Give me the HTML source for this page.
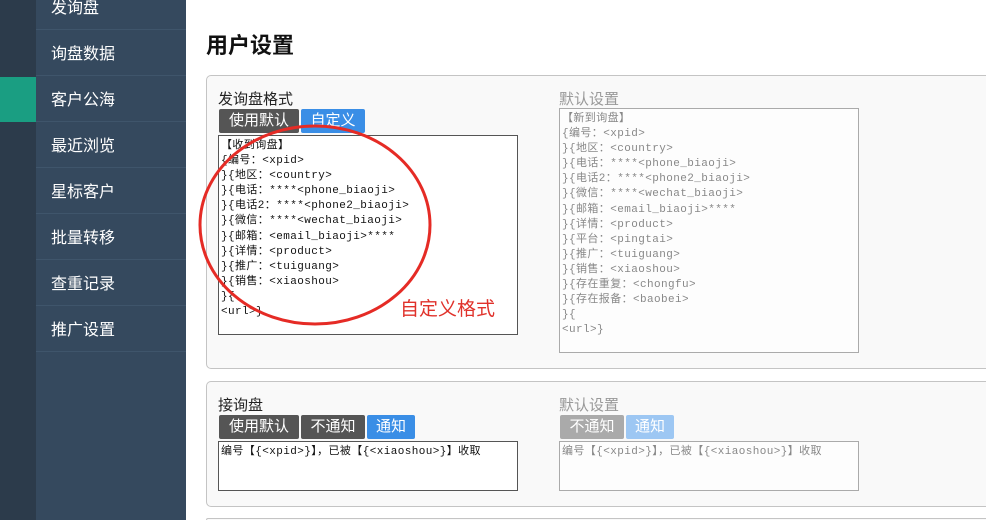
<!DOCTYPE html>
<html><head><meta charset="utf-8"><style>
*{margin:0;padding:0;box-sizing:border-box}
html,body{width:986px;height:520px;overflow:hidden}
body{background:#fff;font-family:"Liberation Sans","Noto Sans CJK SC",sans-serif;position:relative}
.a{position:absolute}
.strip{left:0;top:0;width:36px;height:520px;background:#2c3b4b}
.menu{left:36px;top:0;width:150px;height:520px;background:#35495e}
.item{position:absolute;left:36px;width:150px;height:46px;border-bottom:1px solid #3f556b;color:#fff;font-size:16px;line-height:50px;padding-left:15px}
.panel{position:absolute;left:206px;width:800px;border:1px solid #c4c4c4;border-radius:5px;background:#f9f9f9}
.lbl{position:absolute;font-size:15px;color:#222}
.btn{position:absolute;height:24px;color:#fff;font-size:15px;line-height:24px;text-align:center;border-radius:2px}
.ta{position:absolute;background:#fff;border:1px solid #555;font-family:"Liberation Mono","Noto Sans CJK SC",monospace;font-size:11px;letter-spacing:0.4px;line-height:15.1px;padding:3px 2px;white-space:pre;color:#111;overflow:hidden}
.ta.g{border-color:#aaa;color:#888;background:#fdfdfd}
</style></head><body>
<div class="a strip"></div>
<div class="a" style="left:0;top:77px;width:36px;height:45px;background:#1a9e82"></div>
<div class="a menu"></div>
<div class="item" style="top:-16px">发询盘</div>
<div class="item" style="top:30px">询盘数据</div>
<div class="item" style="top:76px">客户公海</div>
<div class="item" style="top:122px">最近浏览</div>
<div class="item" style="top:168px">星标客户</div>
<div class="item" style="top:214px">批量转移</div>
<div class="item" style="top:260px">查重记录</div>
<div class="item" style="top:306px">推广设置</div>

<div class="a" style="left:206px;top:28px;font-size:22px;font-weight:bold;color:#111">用户设置</div>

<div class="panel" style="top:75px;height:294px"></div>
<div class="lbl" style="left:218px;top:88px">发询盘格式</div>
<div class="btn" style="left:219px;top:109px;width:80px;background:#555">使用默认</div>
<div class="btn" style="left:301px;top:109px;width:64px;background:#3a8ee6">自定义</div>
<div class="ta" style="left:218px;top:135px;width:300px;height:200px">【收到询盘】
{编号：&lt;xpid&gt;
}{地区：&lt;country&gt;
}{电话：****&lt;phone_biaoji&gt;
}{电话2：****&lt;phone2_biaoji&gt;
}{微信：****&lt;wechat_biaoji&gt;
}{邮箱：&lt;email_biaoji&gt;****
}{详情：&lt;product&gt;
}{推广：&lt;tuiguang&gt;
}{销售：&lt;xiaoshou&gt;
}{
&lt;url&gt;}</div>
<div class="lbl" style="left:559px;top:88px;color:#999">默认设置</div>
<div class="ta g" style="left:559px;top:108px;width:300px;height:245px">【新到询盘】
{编号：&lt;xpid&gt;
}{地区：&lt;country&gt;
}{电话：****&lt;phone_biaoji&gt;
}{电话2：****&lt;phone2_biaoji&gt;
}{微信：****&lt;wechat_biaoji&gt;
}{邮箱：&lt;email_biaoji&gt;****
}{详情：&lt;product&gt;
}{平台：&lt;pingtai&gt;
}{推广：&lt;tuiguang&gt;
}{销售：&lt;xiaoshou&gt;
}{存在重复：&lt;chongfu&gt;
}{存在报备：&lt;baobei&gt;
}{
&lt;url&gt;}</div>
<svg class="a" style="left:0;top:0" width="986" height="520"><ellipse cx="315" cy="225" rx="115" ry="99" fill="none" stroke="#e52b25" stroke-width="3"/></svg>
<div class="a" style="left:400px;top:294px;font-size:19px;color:#e0322b">自定义格式</div>

<div class="panel" style="top:381px;height:126px"></div>
<div class="lbl" style="left:218px;top:394px">接询盘</div>
<div class="btn" style="left:219px;top:415px;width:80px;background:#555">使用默认</div>
<div class="btn" style="left:301px;top:415px;width:64px;background:#555">不通知</div>
<div class="btn" style="left:367px;top:415px;width:48px;background:#3a8ee6">通知</div>
<div class="ta" style="left:218px;top:441px;width:300px;height:50px">编号【{&lt;xpid&gt;}】，已被【{&lt;xiaoshou&gt;}】收取</div>
<div class="lbl" style="left:559px;top:394px;color:#999">默认设置</div>
<div class="btn" style="left:560px;top:415px;width:64px;background:#aaa">不通知</div>
<div class="btn" style="left:626px;top:415px;width:48px;background:#9dc7f3">通知</div>
<div class="ta g" style="left:559px;top:441px;width:300px;height:50px">编号【{&lt;xpid&gt;}】，已被【{&lt;xiaoshou&gt;}】收取</div>

<div class="a" style="left:206px;top:518px;width:780px;height:2px;border-top:1px solid #c4c4c4;border-left:1px solid #c4c4c4;border-top-left-radius:5px;background:#f9f9f9"></div>
</body></html>
